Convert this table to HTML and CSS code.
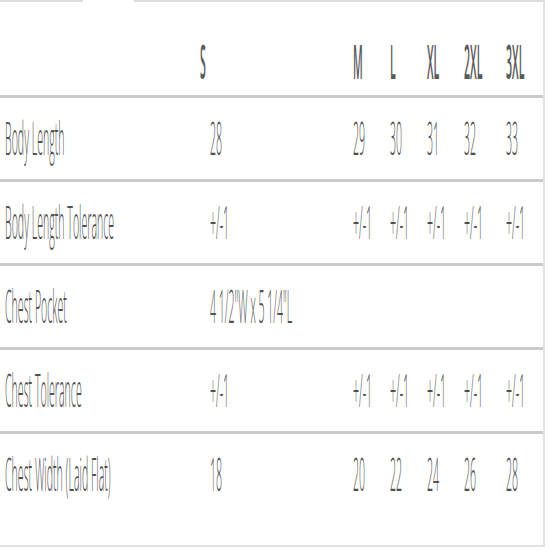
FILE: index.html
```html
<!DOCTYPE html>
<html lang="en">
<head>
<meta charset="utf-8">
<title>Size Chart</title>
<link rel="stylesheet" href="styles.css">
</head>
<body>
<div class="tabs">
  <span class="tab-line tab-left"></span>
  <span class="tab-gap"></span>
  <span class="tab-line tab-right"></span>
</div>
<div class="chart">
  <div class="row head">
    <div class="cell label"></div>
    <div class="cell"><span class="t">S</span></div>
    <div class="cell"><span class="t">M</span></div>
    <div class="cell"><span class="t">L</span></div>
    <div class="cell"><span class="t">XL</span></div>
    <div class="cell"><span class="t">2XL</span></div>
    <div class="cell"><span class="t">3XL</span></div>
  </div>
  <div class="row">
    <div class="cell label"><span class="t">Body Length</span></div>
    <div class="cell first"><span class="t">28</span></div>
    <div class="cell"><span class="t">29</span></div>
    <div class="cell"><span class="t">30</span></div>
    <div class="cell"><span class="t">31</span></div>
    <div class="cell"><span class="t">32</span></div>
    <div class="cell"><span class="t">33</span></div>
  </div>
  <div class="row">
    <div class="cell label"><span class="t">Body Length Tolerance</span></div>
    <div class="cell first"><span class="t">+/-1</span></div>
    <div class="cell"><span class="t">+/-1</span></div>
    <div class="cell"><span class="t">+/-1</span></div>
    <div class="cell"><span class="t">+/-1</span></div>
    <div class="cell"><span class="t">+/-1</span></div>
    <div class="cell"><span class="t">+/-1</span></div>
  </div>
  <div class="row">
    <div class="cell label"><span class="t">Chest Pocket</span></div>
    <div class="cell first"><span class="t">4 1/2"W x 5 1/4"L</span></div>
    <div class="cell"></div>
    <div class="cell"></div>
    <div class="cell"></div>
    <div class="cell"></div>
    <div class="cell"></div>
  </div>
  <div class="row">
    <div class="cell label"><span class="t">Chest Tolerance</span></div>
    <div class="cell first"><span class="t">+/-1</span></div>
    <div class="cell"><span class="t">+/-1</span></div>
    <div class="cell"><span class="t">+/-1</span></div>
    <div class="cell"><span class="t">+/-1</span></div>
    <div class="cell"><span class="t">+/-1</span></div>
    <div class="cell"><span class="t">+/-1</span></div>
  </div>
  <div class="row last">
    <div class="cell label"><span class="t">Chest Width (Laid Flat)</span></div>
    <div class="cell first"><span class="t">18</span></div>
    <div class="cell"><span class="t">20</span></div>
    <div class="cell"><span class="t">22</span></div>
    <div class="cell"><span class="t">24</span></div>
    <div class="cell"><span class="t">26</span></div>
    <div class="cell"><span class="t">28</span></div>
  </div>
</div>
</body>
</html>
```
FILE: styles.css
```css
* { box-sizing: border-box; }
html, body { margin: 0; padding: 0; background: #fff; }
body { font-family: "Open Sans", "Liberation Sans", sans-serif; color: #5a5a5a; }

.tabs { display: flex; width: 545px; height: 2px; }
.tab-line { display: block; height: 2px; background: #dcdcdc; }
.tab-left { width: 83px; }
.tab-gap { width: 51px; }
.tab-right { flex: 1; }

.chart {
  width: 545px;
  border-right: 2px solid #e2e2e2;
  border-bottom: 2px solid #e2e2e2;
  padding-bottom: 27px;
}

.row {
  display: grid;
  grid-template-columns: 200px 153px 37px 37px 37px 42px 37px;
  height: 84px;
  padding-top: 4px;
  border-bottom: 3px solid #cbcbcb;
  align-items: center;
}
.row.head { height: 96px; padding-top: 33px; }
.row.last { border-bottom: 0; height: 84px; padding-bottom: 3px; }

.cell {
  white-space: nowrap;
  min-width: 0;
  font-size: 10.6px;
  line-height: 1.1;
}
.cell.label { padding-left: 5px; }
.cell.first { padding-left: 10px; }

.t {
  display: inline-block;
  vertical-align: top;
  font-size: 10.6px;
  line-height: 1.1;
  font-weight: 300;
  color: #505050;
  transform: scaleY(4.35);
  transform-origin: left center;
}
.head .t { font-weight: 600; color: #5a5a5a; }
```
